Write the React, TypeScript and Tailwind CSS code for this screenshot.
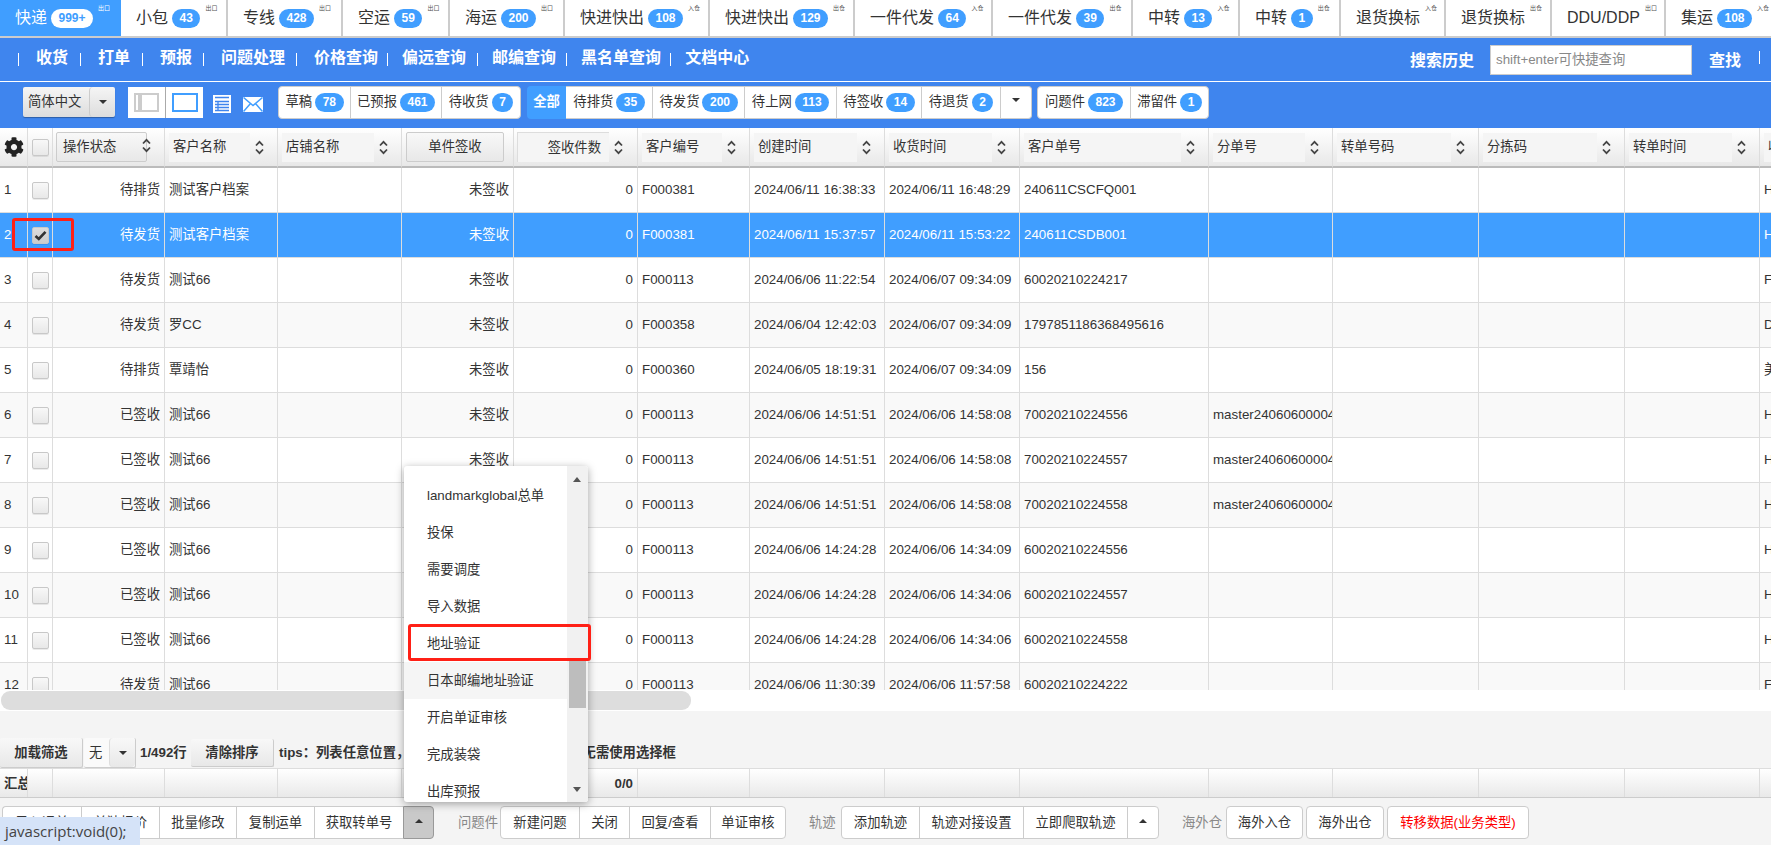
import type { ReactNode } from "react";
import { FaCog } from "react-icons/fa";

const tabs = [
  { t: "快递", b: "999+", s: "出口", w: "w-[121px]", active: true },
  { t: "小包", b: "43", s: "出口", w: "w-[107px]" },
  { t: "专线", b: "428", s: "出口", w: "w-[115px]" },
  { t: "空运", b: "59", s: "出口", w: "w-[107px]" },
  { t: "海运", b: "200", s: "出口", w: "w-[115px]" },
  { t: "快进快出", b: "108", s: "入仓", w: "w-[145px]" },
  { t: "快进快出", b: "129", s: "出仓", w: "w-[145px]" },
  { t: "一件代发", b: "64", s: "入仓", w: "w-[138px]" },
  { t: "一件代发", b: "39", s: "出仓", w: "w-[140px]" },
  { t: "中转", b: "13", s: "入仓", w: "w-[107px]" },
  { t: "中转", b: "1", s: "出仓", w: "w-[101px]" },
  { t: "退货换标", b: "", s: "入仓", w: "w-[105px]" },
  { t: "退货换标", b: "", s: "出仓", w: "w-[106px]" },
  { t: "DDU/DDP", b: "", s: "出口", w: "w-[114px]" },
  { t: "集运", b: "108", s: "入仓", w: "w-[120px]" },
];

const navItems = [
  { t: "收货", c: "ml-[17px] mr-[12px]" },
  { t: "打单", c: "ml-[17px] mr-[12px]" },
  { t: "预报", c: "ml-[17px] mr-[11px]" },
  { t: "问题处理", c: "ml-[17px] mr-[11px]" },
  { t: "价格查询", c: "ml-[17px] mr-[9px]" },
  { t: "偏远查询", c: "ml-[14px] mr-[11px]" },
  { t: "邮编查询", c: "ml-[14px] mr-[10px]" },
  { t: "黑名单查询", c: "ml-[14px] mr-[9px]" },
  { t: "文档中心", c: "ml-[14px] mr-[10px]" },
];

const columns = [
  "w-[28px]", "w-[25px]", "w-[112px]", "w-[113px]", "w-[124px]", "w-[112px]", "w-[124px]", "w-[112px]",
  "w-[135px]", "w-[135px]", "w-[189px]", "w-[124px]", "w-[146px]", "w-[146px]", "w-[135px]", "w-[120px]",
];

const M = "master24060600004";
const rows = [
  ["待排货", "测试客户档案", "F000381", "2024/06/11 16:38:33", "2024/06/11 16:48:29", "240611CSCFQ001", "", "H"],
  ["待发货", "测试客户档案", "F000381", "2024/06/11 15:37:57", "2024/06/11 15:53:22", "240611CSDB001", "", "H"],
  ["待发货", "测试66", "F000113", "2024/06/06 11:22:54", "2024/06/07 09:34:09", "60020210224217", "", "F"],
  ["待发货", "罗CC", "F000358", "2024/06/04 12:42:03", "2024/06/07 09:34:09", "1797851186368495616", "", "D"],
  ["待排货", "覃靖怡", "F000360", "2024/06/05 18:19:31", "2024/06/07 09:34:09", "156", "", "美"],
  ["已签收", "测试66", "F000113", "2024/06/06 14:51:51", "2024/06/06 14:58:08", "70020210224556", M, "H"],
  ["已签收", "测试66", "F000113", "2024/06/06 14:51:51", "2024/06/06 14:58:08", "70020210224557", M, "H"],
  ["已签收", "测试66", "F000113", "2024/06/06 14:51:51", "2024/06/06 14:58:08", "70020210224558", M, "H"],
  ["已签收", "测试66", "F000113", "2024/06/06 14:24:28", "2024/06/06 14:34:09", "60020210224556", "", "H"],
  ["已签收", "测试66", "F000113", "2024/06/06 14:24:28", "2024/06/06 14:34:06", "60020210224557", "", "H"],
  ["已签收", "测试66", "F000113", "2024/06/06 14:24:28", "2024/06/06 14:34:06", "60020210224558", "", "H"],
  ["待发货", "测试66", "F000113", "2024/06/06 11:30:39", "2024/06/06 11:57:58", "60020210224222", "", "F"],
];

const menu = ["landmarkglobal总单", "投保", "需要调度", "导入数据", "地址验证", "日本邮编地址验证", "开启单证审核", "完成装袋", "出库预报"];

function Badge({ v, light }: { v: string; light?: boolean }) {
  return (
    <span
      className={
        "inline-block h-[19px] min-w-[21px] rounded-full px-[7.5px] text-center text-[12px] leading-[19px] font-bold " +
        (light ? "bg-white text-[#409eff]" : "bg-[#409eff] text-white")
      }
    >
      {v}
    </span>
  );
}

function Sort() {
  return (
    <svg width="9" height="15" viewBox="0 0 9 15" className="shrink-0" fill="none" stroke="#444" strokeWidth="1.8">
      <path d="M1 5.5 L4.5 1.8 L8 5.5" />
      <path d="M1 9.5 L4.5 13.2 L8 9.5" />
    </svg>
  );
}

function Check({ checked }: { checked?: boolean }) {
  return (
    <span
      className={
        "mx-auto flex h-[17px] w-[17px] items-center justify-center rounded-[2px] border border-[#c8c8c8] shadow-[0_1px_0_rgba(0,0,0,0.08)] " +
        (checked ? "bg-gradient-to-b from-[#ddd] to-[#ccc]" : "bg-gradient-to-b from-[#f8f8f8] to-[#e8e8e8]")
      }
    >
      {checked && (
        <svg width="13" height="11" viewBox="0 0 13 11" fill="none" stroke="#333" strokeWidth="2.6">
          <path d="M1.5 6 L4.8 9 L11.5 1.8" />
        </svg>
      )}
    </span>
  );
}

function Caret({ up, className = "" }: { up?: boolean; className?: string }) {
  return (
    <span
      className={
        "inline-block h-0 w-0 border-x-[4px] border-x-transparent " +
        (up ? "border-b-[4px] border-b-[#333] " : "border-t-[4px] border-t-[#333] ") +
        className
      }
    />
  );
}

function HeadLabel({ label }: { label: string }) {
  return (
    <div className="flex h-full items-center pl-[4px] pr-[13px]">
      <div className="flex h-[29px] min-w-0 flex-1 items-center bg-[#f5f5f5] pl-[4px] whitespace-nowrap">{label}</div>
      <span className="ml-[5px]">
        <Sort />
      </span>
    </div>
  );
}

function Group({ items, className = "" }: { items: { t: ReactNode; w: string; red?: boolean }[]; className?: string }) {
  return (
    <div className={"flex h-[33px] rounded-[4px] border border-[#ccc] bg-white " + className}>
      {items.map((it, i) => (
        <div
          key={i}
          className={
            "flex items-center justify-center whitespace-nowrap " + it.w + (i ? " border-l border-[#ccc]" : "") + (it.red ? " text-[#ff0000]" : " text-[#333]")
          }
        >
          {it.t}
        </div>
      ))}
    </div>
  );
}

const thCls = "h-[40px] border-r border-b-2 border-[#ddd] border-b-[#bbb] bg-gradient-to-b from-white to-[#e8e8e8] p-0 font-normal";
const sumCls = "h-[29px] border-r border-[#ddd] p-0";

export default function App() {
  return (
    <div className="relative h-[845px] w-[1771px] overflow-hidden bg-[#f4f4f4] text-[13.33px] text-[#333] [font-family:'Liberation_Sans','Noto_Sans_CJK_SC',sans-serif]">
      {/* Top tabs */}
      <div className="flex h-[38px] overflow-hidden border-b-2 border-[#ccc] bg-white">
        {tabs.map((t, i) => (
          <div
            key={i}
            className={
              "relative flex h-full shrink-0 items-center pl-[15px] " +
              t.w +
              (t.active ? " bg-[#409eff] text-white" : " border-r-2 border-[#ccc] text-[#333]")
            }
          >
            <span className="text-[16px] whitespace-nowrap">{t.t}</span>
            {t.b && (
              <span className="ml-[4px]">
                <Badge v={t.b} light={t.active} />
              </span>
            )}
            <span
              className={
                "ml-[5px] -mt-[21px] text-[6px] leading-[8px] whitespace-nowrap " + (t.active ? "text-white" : "text-[#555]")
              }
            >
              {t.s}
            </span>
          </div>
        ))}
      </div>

      {/* Nav */}
      <div className="flex h-[44px] items-center border-b border-white bg-[#3f85ee] pl-[18px] text-white">
        {navItems.map((n, i) => (
          <div key={i} className="flex items-center">
            <span className="h-[13px] w-[1px] bg-white" />
            <span className={"-mt-[3px] text-[16px] font-bold whitespace-nowrap " + n.c}>{n.t}</span>
          </div>
        ))}
        <div className="flex-1" />
        <span className="mt-[3px] text-[16px] font-bold whitespace-nowrap">搜索历史</span>
        <div className="ml-[16px] mt-[1px] flex h-[30px] w-[202px] items-center border border-[#ccc] bg-white pl-[5px] text-[#888]">
          shift+enter可快捷查询
        </div>
        <span className="ml-[17px] mt-[3px] text-[16px] font-bold">查找</span>
        <span className="-mt-[5px] ml-[18px] mr-[11px] h-[13px] w-[1px] bg-white" />
      </div>

      {/* Toolbar */}
      <div className="flex h-[46px] items-center bg-[#3f85ee] pb-[6px] pl-[23px]">
        <div className="flex h-[30px] w-[92px] items-center rounded-[2px] bg-gradient-to-b from-[#f5f5f5] to-[#ddd] pl-[5px] shadow-[0_1px_1px_rgba(0,0,0,0.3)]">
          <span className="w-[61px] whitespace-nowrap">简体中文</span>
          <span className="flex h-full flex-1 items-center justify-center rounded-l-[4px] border-l border-[#ccc]">
            <Caret />
          </span>
        </div>
        <div className="ml-[13px] flex h-[31px] items-center justify-center border-r border-[#aaa] bg-white px-[6px]">
          <span className="flex h-[19px] w-[25px] border-2 border-[#ccc]">
            <span className="ml-[2px] h-full w-[4px] bg-[#ccc]" />
          </span>
        </div>
        <div className="flex h-[31px] w-[37px] items-center justify-center bg-white">
          <span className="h-[19px] w-[26px] border-2 border-[#409eff]" />
        </div>
        <svg className="ml-[10px] mt-[3px]" width="18" height="18" viewBox="0 0 18 18">
          <rect width="18" height="18" fill="#fff" />
          <path d="M2 2.5h14M2 6.5h14M2 9.5h14M2 12.5h14M2 15.5h14" stroke="#3f85ee" strokeWidth="1.3" />
          <path d="M5 6v10" stroke="#3f85ee" strokeWidth="1.3" />
        </svg>
        <svg className="ml-[12px] mt-[4px]" width="20" height="15" viewBox="0 0 20 15">
          <rect width="20" height="15" fill="#fff" />
          <path d="M0.5 0.5 L10 8.5 L19.5 0.5 M0.5 14.5 L7.5 6.5 M19.5 14.5 L12.5 6.5" stroke="#409eff" strokeWidth="1.5" fill="none" />
        </svg>
        <div className="ml-[15px] flex h-[33px] rounded-[4px] border border-[#ccc] bg-white">
          {[
            ["草稿", "78", "w-[71px]"],
            ["已预报", "461", "w-[91px]"],
            ["待收货", "7", "w-[79px]"],
          ].map(([a, b, w], i) => (
            <div key={i} className={"flex items-center justify-center gap-[3px] " + w + (i ? " border-l border-[#ccc]" : "")}>
              {a} <Badge v={b} />
            </div>
          ))}
        </div>
        <div className="ml-[6px] flex h-[33px] w-[39px] items-center justify-center rounded-l-[4px] bg-[#409eff] font-bold text-white">全部</div>
        <div className="flex h-[33px] rounded-r-[4px] border border-l-0 border-[#ccc] bg-white">
          {[
            ["待排货", "35", "w-[86px]"],
            ["待发货", "200", "w-[92px]"],
            ["待上网", "113", "w-[92px]"],
            ["待签收", "14", "w-[85px]"],
            ["待退货", "2", "w-[79px]"],
          ].map(([a, b, w], i) => (
            <div key={i} className={"flex items-center justify-center gap-[3px] " + w + (i ? " border-l border-[#ccc]" : "")}>
              {a} <Badge v={b} />
            </div>
          ))}
          <div className="flex w-[31px] items-center justify-center border-l border-[#ccc] pb-[4px]">
            <Caret />
          </div>
        </div>
        <div className="ml-[5px] flex h-[33px] rounded-[4px] border border-[#ccc] bg-white">
          {[
            ["问题件", "823", "w-[92px]"],
            ["滞留件", "1", "w-[78px]"],
          ].map(([a, b, w], i) => (
            <div key={i} className={"flex items-center justify-center gap-[3px] " + w + (i ? " border-l border-[#ccc]" : "")}>
              {a} <Badge v={b} />
            </div>
          ))}
        </div>
      </div>

      {/* Grid */}
      <div className="h-[562px] overflow-hidden bg-white">
        <table className="w-[1880px] table-fixed border-separate border-spacing-0">
          <colgroup>
            {columns.map((c, i) => (
              <col key={i} className={c} />
            ))}
          </colgroup>
          <thead>
            <tr>
              <th className={thCls}>
                <FaCog className="mx-auto text-[20px] text-[#222]" />
              </th>
              <th className={thCls}>
                <Check />
              </th>
              <th className={thCls}>
                <div className="relative flex h-full items-center pl-[3px]">
                  <div className="flex h-[30px] w-[91px] items-center rounded-[2px] border border-[#ccc] bg-gradient-to-b from-[#f8f8f8] to-[#e8e8e8] pl-[6px]">操作状态</div>
                  <span className="absolute left-[89px] top-[10px]">
                    <Sort />
                  </span>
                </div>
              </th>
              <th className={thCls}>
                <HeadLabel label="客户名称" />
              </th>
              <th className={thCls}>
                <HeadLabel label="店铺名称" />
              </th>
              <th className={thCls}>
                <div className="flex h-full items-center pl-[4px]">
                  <div className="flex h-[30px] w-[98px] items-center justify-center rounded-[2px] border border-[#ccc] bg-gradient-to-b from-[#f8f8f8] to-[#e8e8e8]">单件签收</div>
                </div>
              </th>
              <th className={thCls}>
                <div className="flex h-full items-center pl-[3px] pr-[14px]">
                  <div className="flex h-[30px] flex-1 items-center justify-end border-l border-t border-[#ddd] bg-[#f5f5f5] pr-[8px] whitespace-nowrap">签收件数</div>
                  <span className="ml-[5px]">
                    <Sort />
                  </span>
                </div>
              </th>
              {["客户编号", "创建时间", "收货时间", "客户单号", "分单号", "转单号码", "分拣码", "转单时间"].map((h) => (
                <th key={h} className={thCls}>
                  <HeadLabel label={h} />
                </th>
              ))}
              <th className={thCls}>
                <div className="flex h-full items-center pl-[4px]">
                  <div className="flex h-[29px] flex-1 items-center bg-[#f5f5f5] pl-[4px] whitespace-nowrap">收货渠道</div>
                </div>
              </th>
            </tr>
          </thead>
          <tbody>
            {rows.map((r, i) => {
              const sel = i === 1;
              const bg = sel ? "bg-[#409eff] text-white" : i % 2 ? "bg-[#f9f9f9]" : "bg-white";
              const td = "h-[45px] border-r border-b border-[#ddd] px-[4px] overflow-hidden whitespace-nowrap " + bg;
              return (
                <tr key={i}>
                  <td className={td}>{i + 1}</td>
                  <td className={td + " !px-0"}>
                    <Check checked={sel} />
                  </td>
                  <td className={td + " text-right"}>{r[0]}</td>
                  <td className={td}>{r[1]}</td>
                  <td className={td} />
                  <td className={td + " text-right"}>未签收</td>
                  <td className={td + " text-right"}>0</td>
                  <td className={td}>{r[2]}</td>
                  <td className={td}>{r[3]}</td>
                  <td className={td}>{r[4]}</td>
                  <td className={td}>{r[5]}</td>
                  <td className={td}>{r[6]}</td>
                  <td className={td} />
                  <td className={td} />
                  <td className={td} />
                  <td className={td}>{r[7]}</td>
                </tr>
              );
            })}
          </tbody>
        </table>
      </div>

      {/* Horizontal scrollbar */}
      <div className="h-[21px] bg-white pt-[1px]">
        <div className="ml-[1px] h-[19px] w-[690px] rounded-[9px] bg-[#ddd]" />
      </div>

      {/* Filter row */}
      <div className="mt-[27px] flex h-[30px] items-center font-bold">
        <div className="flex h-[30px] w-[83px] items-center justify-center rounded-[2px] border-b border-r border-[#ccc] bg-gradient-to-b from-[#f8f8f8] to-[#e8e8e8]">加载筛选</div>
        <div className="ml-[1px] flex h-[30px] w-[52px] items-center rounded-[2px] border-b border-r border-[#ccc] bg-[#fafafa] pl-[5px] font-normal">
          <span className="w-[20px]">无</span>
          <span className="flex h-full flex-1 items-center justify-center rounded-[4px] border-l border-[#ddd] bg-gradient-to-b from-[#f8f8f8] to-[#e8e8e8]">
            <Caret />
          </span>
        </div>
        <span className="ml-[4px] w-[51px] whitespace-nowrap">1/492行</span>
        <div className="flex h-[28px] w-[83px] items-center justify-center rounded-[2px] border-b border-r border-[#ccc] bg-gradient-to-b from-[#f8f8f8] to-[#e8e8e8]">清除排序</div>
        <span className="ml-[5px] whitespace-nowrap">tips：列表任意位置，双击即可选中数据进行操作，无需使用选择框</span>
      </div>

      {/* Summary row */}
      <div className="h-[30px] overflow-hidden border-y border-[#ccc] border-t-[#ddd]">
        <table className="w-[1880px] table-fixed border-separate border-spacing-0 bg-gradient-to-b from-white to-[#e8e8e8]">
          <colgroup>
            {columns.map((c, i) => (
              <col key={i} className={c} />
            ))}
          </colgroup>
          <tbody>
            <tr>
              {columns.map((_, i) => (
                <td key={i} className={sumCls + " overflow-hidden font-bold whitespace-nowrap " + (i === 6 ? "pr-[4px] text-right" : "pl-[4px]")}>
                  {i === 0 ? "汇总" : i === 6 ? "0/0" : ""}
                </td>
              ))}
            </tr>
          </tbody>
        </table>
      </div>

      {/* Bottom buttons */}
      <div className="mt-[8px] flex items-center pl-[2px]">
        <Group
          items={[
            { t: "导入运单", w: "w-[78px]" },
            { t: "单独报价", w: "w-[78px]" },
            { t: "批量修改", w: "w-[77px]" },
            { t: "复制运单", w: "w-[78px]" },
            { t: "获取转单号", w: "w-[89px]" },
          ]}
          className="rounded-r-none border-r-0"
        />
        <div className="flex h-[33px] w-[31px] items-center justify-center rounded-r-[4px] border border-[#999] bg-[#c9c9c9] pb-[4px]">
          <Caret up />
        </div>
        <span className="ml-[24px] w-[42px] text-[#888]">问题件</span>
        <Group
          items={[
            { t: "新建问题", w: "w-[78px]" },
            { t: "关闭", w: "w-[50px]" },
            { t: "回复/查看", w: "w-[81px]" },
            { t: "单证审核", w: "w-[75px]" },
          ]}
        />
        <span className="ml-[23px] w-[32px] text-[#888]">轨迹</span>
        <Group
          items={[
            { t: "添加轨迹", w: "w-[77px]" },
            { t: "轨迹对接设置", w: "w-[104px]" },
            { t: "立即爬取轨迹", w: "w-[104px]" },
            { t: <Caret up className="mb-[4px]" />, w: "w-[31px]" },
          ]}
        />
        <span className="ml-[23px] w-[44px] text-[#888]">海外仓</span>
        <Group items={[{ t: "海外入仓", w: "w-[75px]" }]} />
        <Group items={[{ t: "海外出仓", w: "w-[76px]" }]} className="ml-[3px]" />
        <Group items={[{ t: "转移数据(业务类型)", w: "w-[140px]", red: true }]} className="ml-[3px]" />
      </div>

      {/* Dropdown */}
      <div className="absolute left-[404px] top-[466px] flex h-[336px] w-[184px] overflow-hidden rounded-[3px] bg-white shadow-[0_2px_8px_rgba(0,0,0,0.35)]">
        <div className="w-[163px] pt-[11px]">
          {menu.map((m, i) => (
            <div key={i} className={"flex h-[37px] w-[163px] items-center pl-[23px] whitespace-nowrap " + (i === 5 ? "bg-[#f5f5f5]" : "")}>
              {m}
            </div>
          ))}
        </div>
        <div className="relative w-[21px] bg-[#f1f1f1]">
          <Caret up className="absolute left-[6px] top-[11px] !border-b-[#555] !border-b-[5px]" />
          <Caret className="absolute bottom-[10px] left-[6px] !border-t-[#555] !border-t-[5px]" />
          <div className="absolute left-[2px] top-[195px] h-[47px] w-[17px] bg-[#bdbdbd]" />
        </div>
      </div>

      {/* Annotations */}
      <div className="absolute left-[12px] top-[218px] h-[33px] w-[62px] rounded-[3px] border-[3px] border-[#ff2016]" />
      <div className="absolute left-[408px] top-[624px] h-[37px] w-[183px] rounded-[3px] border-[3px] border-[#ff2016]" />

      {/* Status bar */}
      <div className="absolute bottom-0 left-0 flex h-[28px] w-[140px] items-center bg-[#d5e3f8] pl-[5px] text-[15px] text-[#444] [font-family:'Open_Sans',sans-serif]">
        javascript:void(0);
      </div>
    </div>
  );
}
